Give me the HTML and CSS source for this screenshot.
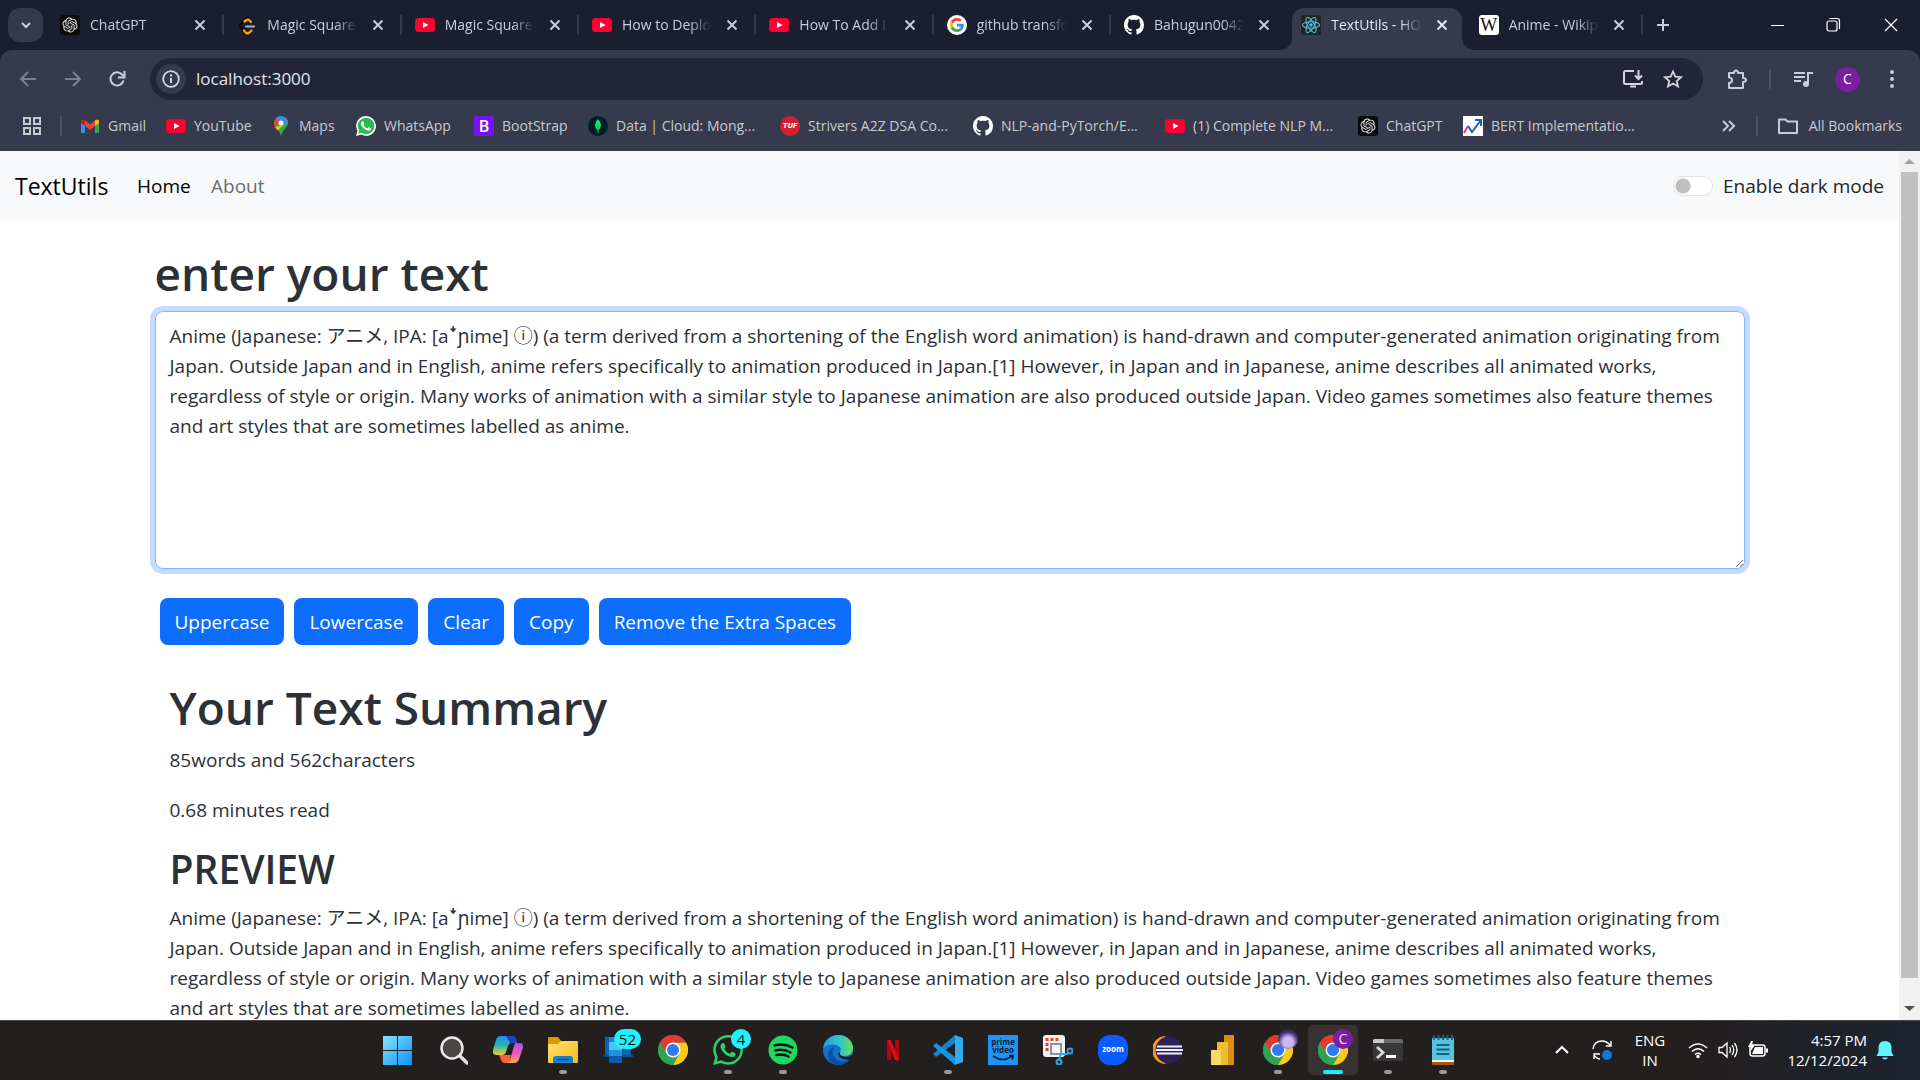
FILE: index.html
```html
<!DOCTYPE html>
<html lang="en">
<head>
<meta charset="utf-8">
<title>TextUtils - Home</title>
<link rel="stylesheet" href="styles.css">
</head>
<body>
<svg class="sprite" aria-hidden="true">
  <symbol id="i-openai" viewBox="0 0 20 20"><rect width="20" height="20" rx="3" fill="#0a0a0a"/><g transform="translate(2.500 2.500) scale(.625)"><path fill="#f0f0f0" d="M22.2819 9.8211a5.9847 5.9847 0 0 0-.5157-4.9108 6.0462 6.0462 0 0 0-6.5098-2.9A6.0651 6.0651 0 0 0 4.9807 4.1818a5.9847 5.9847 0 0 0-3.9977 2.9 6.0462 6.0462 0 0 0 .7427 7.0966 5.98 5.98 0 0 0 .511 4.9107 6.051 6.051 0 0 0 6.5146 2.9001A5.9847 5.9847 0 0 0 13.2599 24a6.0557 6.0557 0 0 0 5.7718-4.2058 5.9894 5.9894 0 0 0 3.9977-2.9001 6.0557 6.0557 0 0 0-.7475-7.0729zm-9.022 12.6081a4.4755 4.4755 0 0 1-2.8764-1.0408l.1419-.0804 4.7783-2.7582a.7948.7948 0 0 0 .3927-.6813v-6.7369l2.02 1.1686a.071.071 0 0 1 .038.052v5.5826a4.504 4.504 0 0 1-4.4945 4.4944zm-9.6607-4.1254a4.4708 4.4708 0 0 1-.5346-3.0137l.142.0852 4.783 2.7582a.7712.7712 0 0 0 .7806 0l5.8428-3.3685v2.3324a.0804.0804 0 0 1-.0332.0615L9.74 19.9502a4.4992 4.4992 0 0 1-6.1408-1.6464zM2.3408 7.8956a4.485 4.485 0 0 1 2.3655-1.9728V11.6a.7664.7664 0 0 0 .3879.6765l5.8144 3.3543-2.0201 1.1685a.0757.0757 0 0 1-.071 0l-4.8303-2.7865A4.504 4.504 0 0 1 2.3408 7.872zm16.5963 3.8558L13.1038 8.364 15.1192 7.2a.0757.0757 0 0 1 .071 0l4.8303 2.7913a4.4944 4.4944 0 0 1-.6765 8.1042v-5.6772a.79.79 0 0 0-.407-.667zm2.0107-3.0231l-.142-.0852-4.7735-2.7818a.7759.7759 0 0 0-.7854 0L9.409 9.2297V6.8974a.0662.0662 0 0 1 .0284-.0615l4.8303-2.7866a4.4992 4.4992 0 0 1 6.6802 4.66zM8.3065 12.863l-2.02-1.1638a.0804.0804 0 0 1-.038-.0567V6.0742a4.4992 4.4992 0 0 1 7.3757-3.4537l-.142.0805L8.704 5.459a.7948.7948 0 0 0-.3927.6813zm1.0976-2.3654l2.602-1.4998 2.6069 1.4998v2.9994l-2.5974 1.4997-2.6067-1.4997Z"/></g></symbol>
  <symbol id="i-leetcode" viewBox="0 0 20 20"><path d="M11 1.500 4 9q-1.500 1.500-.5 3l4.500 5.500" fill="none" stroke="#080808" stroke-width="2.200" stroke-linecap="round"/><path d="m7.500 6.500 2-1.500q1.500-1 3 .5l1.500 1.500M7 15.500l1.500 2q2 1.500 4 0l2-2" fill="none" stroke="#ffa116" stroke-width="2.200" stroke-linecap="round"/><path d="M9 11.500h8" stroke="#b3b3b3" stroke-width="2" stroke-linecap="round"/></symbol>
  <symbol id="i-youtube" viewBox="0 0 20 20"><rect y="3" width="20" height="14" rx="3.500" fill="#ff0033"/><path d="m8 7 5.500 3L8 13z" fill="#fff"/></symbol>
  <symbol id="i-google" viewBox="0 0 20 20"><circle cx="10" cy="10" r="10" fill="#fff"/><g transform="translate(3 3) scale(.2917)"><path fill="#EA4335" d="M24 9.500c3.540 0 6.710 1.220 9.210 3.600l6.850-6.850C35.900 2.380 30.470 0 24 0 14.620 0 6.510 5.380 2.560 13.220l7.980 6.190C12.430 13.720 17.740 9.500 24 9.500z"/><path fill="#4285F4" d="M46.980 24.550c0-1.570-.15-3.090-.38-4.550H24v9.020h12.940c-.58 2.960-2.260 5.480-4.780 7.180l7.730 6c4.510-4.180 7.090-10.360 7.090-17.650z"/><path fill="#FBBC05" d="M10.530 28.590c-.48-1.450-.76-2.990-.76-4.590s.27-3.140.76-4.590l-7.980-6.190C.92 16.460 0 20.120 0 24c0 3.880.92 7.540 2.560 10.780l7.970-6.190z"/><path fill="#34A853" d="M24 48c6.480 0 11.930-2.130 15.890-5.810l-7.730-6c-2.150 1.450-4.920 2.300-8.160 2.300-6.260 0-11.570-4.220-13.470-9.910l-7.980 6.190C6.510 42.620 14.620 48 24 48z"/></g></symbol>
  <symbol id="i-github" viewBox="0 0 16 16"><path fill="#fff" d="M8 0C3.580 0 0 3.580 0 8c0 3.540 2.290 6.530 5.470 7.590.4.070.55-.17.55-.38 0-.19-.01-.82-.01-1.490-2.010.37-2.530-.49-2.690-.94-.09-.23-.48-.94-.82-1.130-.28-.15-.68-.52-.01-.53.63-.01 1.080.58 1.230.82.72 1.210 1.870.87 2.330.66.070-.52.28-.87.51-1.070-1.780-.2-3.640-.89-3.640-3.950 0-.87.31-1.590.82-2.150-.08-.2-.36-1.020.08-2.120 0 0 .67-.21 2.200.82.64-.18 1.320-.27 2-.27.68 0 1.360.09 2 .27 1.530-1.040 2.200-.82 2.200-.82.44 1.100.16 1.920.08 2.120.51.56.82 1.270.82 2.150 0 3.070-1.870 3.750-3.650 3.950.29.25.54.73.54 1.480 0 1.070-.01 1.930-.01 2.200 0 .21.15.46.55.38A8.013 8.013 0 0016 8c0-4.420-3.580-8-8-8z"/></symbol>
  <symbol id="i-react" viewBox="0 0 20 20"><rect width="20" height="20" rx="2" fill="#222426"/><g fill="none" stroke="#53c1de" stroke-width="1.100"><ellipse cx="10" cy="10" rx="8.500" ry="3.300"/><ellipse cx="10" cy="10" rx="8.500" ry="3.300" transform="rotate(60 10 10)"/><ellipse cx="10" cy="10" rx="8.500" ry="3.300" transform="rotate(120 10 10)"/></g><circle cx="10" cy="10" r="1.700" fill="#53c1de"/></symbol>
  <symbol id="i-close" viewBox="0 0 20 20"><path d="m5.500 5.500 9 9m0-9-9 9" fill="none" stroke="currentColor" stroke-width="2"/></symbol>
  <symbol id="i-gmail" viewBox="0 0 20 20"><path d="M1 5v12h4V9z" fill="#4285f4"/><path d="M19 5v12h-4V9z" fill="#34a853"/><path d="M15 4.500V10l4-3V5q-.5-2.500-3-1z" fill="#fbbc04"/><path d="M5 4.500V10L1 7V5q.5-2.500 3-1z" fill="#c5221f"/><path d="m5 4.500 5 4 5-4V10l-5 4-5-4z" fill="#ea4335"/></symbol>
  <symbol id="i-maps" viewBox="0 0 20 20"><path d="M3 7a7 7 0 0 1 14 0c0 4-5 6-7 13C8 13 3 11 3 7z" fill="#34a853"/><path d="M5 2.500A7 7 0 0 1 17 7l-4-.5z" fill="#4285f4"/><path d="m5 2.500 4 2.500-5.500 6Q3 9 3 7 3 4.500 5 2.500z" fill="#ea4335"/><path d="m4 11 8-2-5 5.500Q5 13 4 11z" fill="#fbbc04"/><circle cx="10" cy="7" r="2.500" fill="#fff"/></symbol>
  <symbol id="i-wa-path" viewBox="0 0 24 24"><path fill="currentColor" d="M17.472 14.382c-.297-.149-1.758-.867-2.030-.967-.273-.099-.471-.148-.67.15-.197.297-.767.966-.94 1.164-.173.199-.347.223-.644.075-.297-.15-1.255-.463-2.390-1.475-.883-.788-1.480-1.761-1.653-2.059-.173-.297-.018-.458.13-.606.134-.133.298-.347.446-.52.149-.174.198-.298.298-.497.099-.198.05-.371-.025-.52-.075-.149-.669-1.612-.916-2.207-.242-.579-.487-.5-.669-.51-.173-.008-.371-.01-.57-.01-.198 0-.52.074-.792.372-.272.297-1.040 1.016-1.040 2.479 0 1.462 1.065 2.875 1.213 3.074.149.198 2.096 3.200 5.077 4.487.709.306 1.262.489 1.694.625.712.227 1.360.195 1.871.118.571-.085 1.758-.719 2.006-1.413.248-.694.248-1.289.173-1.413-.074-.124-.272-.198-.57-.347m-5.421 7.403h-.004a9.870 9.870 0 01-5.031-1.378l-.361-.214-3.741.982.998-3.648-.235-.374a9.860 9.860 0 01-1.510-5.260c.001-5.450 4.436-9.884 9.888-9.884 2.640 0 5.122 1.030 6.988 2.898a9.825 9.825 0 012.893 6.994c-.003 5.450-4.437 9.884-9.885 9.884m8.413-18.297A11.815 11.815 0 0012.050 0C5.495 0 .16 5.335.157 11.892c0 2.096.547 4.142 1.588 5.945L.057 24l6.305-1.654a11.882 11.882 0 005.683 1.448h.005c6.554 0 11.890-5.335 11.893-11.893a11.821 11.821 0 00-3.480-8.413Z"/></symbol>
  <symbol id="i-whatsapp" viewBox="0 0 24 24"><path d="M1 23 3 17A11 11 0 1 1 7 21.500z" fill="#2abb4c"/><use href="#i-wa-path" width="24" height="24" color="#fff"/></symbol>
  <symbol id="i-mongo" viewBox="0 0 20 20"><circle cx="10" cy="10" r="10" fill="#001e2b"/><path d="M10 3q6 6.500 0 12-6-5.500 0-12z" fill="#00ed64"/><path d="M10 9v8" stroke="#0aa84a"/></symbol>
  <symbol id="i-chart" viewBox="0 0 20 20"><rect width="20" height="20" fill="#fff"/><path d="m1 17 4-7" stroke="#e3405f" stroke-width="2"/><path d="m5 10 4 6 9-12" fill="none" stroke="#1f5fae" stroke-width="2"/><path d="M12 4h6v6" fill="none" stroke="#1f5fae" stroke-width="2"/></symbol>
  <symbol id="i-chrome" viewBox="0 0 30 30"><circle cx="15" cy="15" r="15" fill="#33a152"/><path d="M28 7.500A15 15 0 0 1 15 30l6.500-11.500L15 7.500z" fill="#fdc91c"/><path d="M2 7.500A15 15 0 0 1 28 7.500H15V15L8.500 18.700z" fill="#e23a30"/><path d="M2 7.500 8.500 18.700 15 22 21.500 18.700 15 30A15 15 0 0 1 2 7.500z" fill="#33a152"/><circle cx="15" cy="15" r="7.500" fill="#fff"/><circle cx="15" cy="15" r="6" fill="#2f7bee"/></symbol>
</svg>

<header class="browser">
  <div class="tabstrip">
    <button class="tab-search" aria-label="Search tabs"><svg class="icon" viewBox="0 0 20 20"><path d="m6 8 4 4 4-4" fill="none" stroke="currentColor" stroke-width="2"/></svg></button>
    <nav class="tabs" aria-label="Tabs">
      <div class="tab"><svg class="icon"><use href="#i-openai"/></svg><button class="tab-title">ChatGPT</button><button class="tab-close" aria-label="Close"><svg class="icon"><use href="#i-close"/></svg></button></div>
      <div class="tab"><svg class="icon"><use href="#i-leetcode"/></svg><button class="tab-title">Magic Square</button><button class="tab-close" aria-label="Close"><svg class="icon"><use href="#i-close"/></svg></button></div>
      <div class="tab"><svg class="icon"><use href="#i-youtube"/></svg><button class="tab-title">Magic Square</button><button class="tab-close" aria-label="Close"><svg class="icon"><use href="#i-close"/></svg></button></div>
      <div class="tab"><svg class="icon"><use href="#i-youtube"/></svg><button class="tab-title">How to Deplo</button><button class="tab-close" aria-label="Close"><svg class="icon"><use href="#i-close"/></svg></button></div>
      <div class="tab"><svg class="icon"><use href="#i-youtube"/></svg><button class="tab-title">How To Add I</button><button class="tab-close" aria-label="Close"><svg class="icon"><use href="#i-close"/></svg></button></div>
      <div class="tab"><svg class="icon"><use href="#i-google"/></svg><button class="tab-title">github transfo</button><button class="tab-close" aria-label="Close"><svg class="icon"><use href="#i-close"/></svg></button></div>
      <div class="tab before-active"><svg class="icon"><use href="#i-github"/></svg><button class="tab-title">Bahugun0042</button><button class="tab-close" aria-label="Close"><svg class="icon"><use href="#i-close"/></svg></button></div>
      <div class="tab active"><svg class="icon"><use href="#i-react"/></svg><button class="tab-title">TextUtils - HO</button><button class="tab-close" aria-label="Close"><svg class="icon"><use href="#i-close"/></svg></button></div>
      <div class="tab"><span class="icon letter-icon wiki">W</span><button class="tab-title">Anime - Wikip</button><button class="tab-close" aria-label="Close"><svg class="icon"><use href="#i-close"/></svg></button></div>
    </nav>
    <button class="new-tab" aria-label="New tab"><svg class="icon" viewBox="0 0 20 20"><path d="M10 4v12M4 10h12" stroke="currentColor" stroke-width="2"/></svg></button>
    <div class="window-buttons">
      <button aria-label="Minimize"><svg class="icon" viewBox="0 0 20 20"><path d="M4 10.500h13" stroke="#fff" stroke-width="1"/></svg></button>
      <button aria-label="Restore"><svg class="icon" viewBox="0 0 20 20"><rect x="3" y="6" width="10" height="10" rx="2" fill="none" stroke="#fff" stroke-width="1.200"/><path d="M5.500 3.500H13q2.500 0 2.500 2.500v8" fill="none" stroke="#fff" stroke-width="1.200"/></svg></button>
      <button aria-label="Close window"><svg class="icon" viewBox="0 0 20 20"><path d="m4 4 12 12m0-12L4 16" stroke="#fff" stroke-width="1.200"/></svg></button>
    </div>
  </div>

  <div class="toolbar">
    <div class="nav-buttons">
      <button class="dim" aria-label="Back"><svg class="icon" viewBox="0 0 20 20"><path d="M18 10H3m7-7-7 7 7 7" fill="none" stroke="currentColor" stroke-width="2"/></svg></button>
      <button class="dim" aria-label="Forward"><svg class="icon" viewBox="0 0 20 20"><path d="M2 10h15m-7-7 7 7-7 7" fill="none" stroke="currentColor" stroke-width="2"/></svg></button>
      <button aria-label="Reload"><svg class="icon" viewBox="0 0 20 20"><path d="M15.500 11.500A6.600 6.600 0 1 1 14 5.500l1.500 1.700" fill="none" stroke="currentColor" stroke-width="2"/><path d="M16.500 2v6.500H10" fill="none" stroke="currentColor" stroke-width="2"/></svg></button>
    </div>
    <div class="omnibox">
      <button class="site-info" aria-label="Site information"><svg class="icon" viewBox="0 0 20 20"><circle cx="10" cy="10" r="7.800" fill="none" stroke="currentColor" stroke-width="1.800"/><path d="M10 9v5M10 5.500v2" stroke="currentColor" stroke-width="2"/></svg></button>
      <input class="url" type="text" value="localhost:3000" aria-label="Address">
      <button aria-label="Install app"><svg class="icon" viewBox="0 0 20 20"><path d="M11 2H2.500Q1 2 1 3.500v10Q1 15 2.500 15h15q1.500 0 1.500-1.500V12M7 17.500h6" fill="none" stroke="currentColor" stroke-width="2"/><path d="M15.500 1v9m-3.500-3.500 3.500 3.500L19 6.500" fill="none" stroke="currentColor" stroke-width="2"/></svg></button>
      <button aria-label="Bookmark this tab"><svg class="icon" viewBox="0 0 20 20"><path d="m10 2.500 2.300 5.200 5.700.5-4.300 3.800 1.300 5.500-5-3-5 3 1.300-5.500L2 8.200l5.700-.5z" fill="none" stroke="currentColor" stroke-width="1.800"/></svg></button>
    </div>
    <div class="toolbar-end">
      <button aria-label="Extensions"><svg class="icon" viewBox="0 0 20 20"><path d="M2 4h5q0-2.500 2-2.500T11 4h5v5q3 0 3 2t-3 2v6H2v-5q3 0 3-2.800T2 8.500z" fill="none" stroke="currentColor" stroke-width="2" stroke-linejoin="round"/></svg></button>
      <span class="divider"></span>
      <button aria-label="Media"><svg class="icon" viewBox="0 0 20 20"><path d="M1 4h11M1 8h11M1 12h7M15 15V4h5" fill="none" stroke="currentColor" stroke-width="2"/><circle cx="13" cy="15" r="3" fill="currentColor"/></svg></button>
      <button class="avatar" aria-label="Profile">C</button>
      <button aria-label="Menu"><svg class="icon" viewBox="0 0 20 20" fill="currentColor"><circle cx="10" cy="3" r="2"/><circle cx="10" cy="10" r="2"/><circle cx="10" cy="17" r="2"/></svg></button>
    </div>
  </div>

  <nav class="bookmarks" aria-label="Bookmarks">
    <button class="apps" aria-label="Apps"><svg class="icon" viewBox="0 0 20 20"><path d="M2 2h6v6H2zM12 2h6v6h-6zM2 12h6v6H2zM12 12h6v6h-6z" fill="none" stroke="currentColor" stroke-width="2"/></svg></button>
    <span class="divider"></span>
    <div class="bookmark-list">
      <a href="#"><svg class="icon"><use href="#i-gmail"/></svg>Gmail</a>
      <a href="#"><svg class="icon"><use href="#i-youtube"/></svg>YouTube</a>
      <a href="#"><svg class="icon"><use href="#i-maps"/></svg>Maps</a>
      <a href="#"><svg class="icon"><use href="#i-whatsapp"/></svg>WhatsApp</a>
      <a href="#"><span class="icon letter-icon bootstrap">B</span>BootStrap</a>
      <a href="#"><svg class="icon"><use href="#i-mongo"/></svg>Data | Cloud: Mong...</a>
      <a href="#"><span class="icon letter-icon tuf">TUF</span>Strivers A2Z DSA Co...</a>
      <a href="#"><svg class="icon"><use href="#i-github"/></svg>NLP-and-PyTorch/E...</a>
      <a href="#"><svg class="icon"><use href="#i-youtube"/></svg>(1) Complete NLP M...</a>
      <a href="#"><svg class="icon"><use href="#i-openai"/></svg>ChatGPT</a>
      <a href="#"><svg class="icon"><use href="#i-chart"/></svg>BERT Implementatio...</a>
    </div>
    <button class="more" aria-label="More bookmarks"><svg class="icon" viewBox="0 0 20 20"><path d="m5 5 5 5-5 5m6-10 5 5-5 5" fill="none" stroke="currentColor" stroke-width="2"/></svg></button>
    <span class="divider"></span>
    <a class="all-bookmarks" href="#"><svg class="icon" viewBox="0 0 20 20"><path d="M1 3.500h6.500l2 2H19V17H1z" fill="none" stroke="currentColor" stroke-width="2" stroke-linejoin="round"/></svg>All Bookmarks</a>
  </nav>
</header>

<div class="viewport">
  <div class="page">
    <nav class="navbar">
      <a class="brand" href="#">TextUtils</a>
      <a class="nav-link current" href="#">Home</a>
      <a class="nav-link" href="#">About</a>
      <div class="switch">
        <input type="checkbox" role="switch" id="dark">
        <label for="dark">Enable dark mode</label>
      </div>
    </nav>
    <main class="container">
      <h1><label for="text">enter your text</label></h1>
      <textarea class="editor" id="text" rows="8" spellcheck="false">Anime (Japanese: アニメ, IPA: [aꜜɲime] ⓘ) (a term derived from a shortening of the English word animation) is hand-drawn and computer-generated animation originating from Japan. Outside Japan and in English, anime refers specifically to animation produced in Japan.[1] However, in Japan and in Japanese, anime describes all animated works, regardless of style or origin. Many works of animation with a similar style to Japanese animation are also produced outside Japan. Video games sometimes also feature themes and art styles that are sometimes labelled as anime.</textarea>
      <div class="actions">
        <button class="btn">Uppercase</button>
        <button class="btn">Lowercase</button>
        <button class="btn">Clear</button>
        <button class="btn">Copy</button>
        <button class="btn">Remove the Extra Spaces</button>
      </div>
      <section class="summary">
        <h1>Your Text Summary</h1>
        <p>85words and 562characters</p>
        <p>0.68 minutes read</p>
        <h2>PREVIEW</h2>
        <p>Anime (Japanese: アニメ, IPA: [aꜜɲime] ⓘ) (a term derived from a shortening of the English word animation) is hand-drawn and computer-generated animation originating from Japan. Outside Japan and in English, anime refers specifically to animation produced in Japan.[1] However, in Japan and in Japanese, anime describes all animated works, regardless of style or origin. Many works of animation with a similar style to Japanese animation are also produced outside Japan. Video games sometimes also feature themes and art styles that are sometimes labelled as anime.</p>
      </section>
    </main>
  </div>
  <div class="scrollbar" aria-hidden="true">
    <svg class="arrow" viewBox="0 0 21 21"><path d="m5 13 5.500-5 5.500 5z" fill="#a3a3a3"/></svg>
    <div class="track"><div class="thumb"></div></div>
    <svg class="arrow" viewBox="0 0 21 21"><path d="m5 7 5.500 5L16 7z" fill="#505050"/></svg>
  </div>
</div>

<footer class="taskbar">
  <div class="apps-row">
    <button class="app" aria-label="Start"><svg viewBox="0 0 30 30"><defs><linearGradient id="win" x1="0" y1="0" x2="1" y2="1"><stop offset="0" stop-color="#8be0ff"/><stop offset="1" stop-color="#0a94f5"/></linearGradient></defs><path d="M0 1h14v14H0zM15 1h14v14H15zM0 16h14v14H0zM15 16h14v14H15z" fill="url(#win)"/></svg></button>
    <button class="app" aria-label="Search"><svg viewBox="0 0 30 30"><path d="m21 20 8 8" stroke="#dcdfe3" stroke-width="3.500" stroke-linecap="round"/><circle cx="14" cy="13" r="10.500" fill="#4a4644" stroke="#e8eaec" stroke-width="2.500"/></svg></button>
    <button class="app" aria-label="Copilot"><svg viewBox="0 0 30 30"><defs><linearGradient id="cp1" x1="0" y1="0" x2="0" y2="1"><stop offset="0" stop-color="#1f8ff5"/><stop offset=".5" stop-color="#2bb6a8"/><stop offset="1" stop-color="#f2d13a"/></linearGradient><linearGradient id="cp2" x1="0" y1="0" x2="0" y2="1"><stop offset="0" stop-color="#a552e8"/><stop offset=".5" stop-color="#e85ab5"/><stop offset="1" stop-color="#ffa35e"/></linearGradient></defs><path d="M8 1h11q3 0 4 3l1 4h-5q-3 0-4 3l-2 6q-1 3-4 3H4q-5 0-4-5L3 5q1-4 5-4z" fill="url(#cp1)"/><path d="M13 1h6q3 0 4 3l1 4h-7z" fill="#1b40c9"/><path d="m6 20 2 5q1 3 4 3h4l2-8z" fill="#f5623a"/><path d="M22 8h4q5 0 4 5l-4 11q-1 4-5 4h-8q3 0 4-3l4-14q.5-3 1-3z" fill="url(#cp2)"/></svg></button>
    <button class="app running" aria-label="File Explorer"><svg viewBox="0 0 30 30"><defs><linearGradient id="fe" x1="0" y1="0" x2="1" y2="1"><stop offset="0" stop-color="#ffe17a"/><stop offset="1" stop-color="#f8b90e"/></linearGradient></defs><path d="M0 3q0-1 1-1h9l3 4v4H0z" fill="#d99a06"/><path d="M0 9h10l3-3h16q1 0 1 1v20q0 1-1 1H1q-1 0-1-1z" fill="url(#fe)"/><path d="M5 28v-4q0-3 3-3h14q3 0 3 3v4z" fill="#1580cc"/><path d="M9 24.500h12" stroke="#0a4f86" stroke-width="1.500"/></svg></button>
    <button class="app" aria-label="Phone Link"><svg viewBox="0 0 30 30"><path d="M2 2h26v18H2z" fill="#0a62b0"/><path d="M0 20h30v2H1z" fill="#12508f"/><path d="M6 2h13v5H6z" fill="#1586d6"/><path d="M6 7h13v8H6z" fill="#49c4f7"/><path d="M6 15h13v6H6z" fill="#1c93e2"/><path d="M6 21h13v7H6z" fill="#0b5cad"/></svg><span class="badge">52</span></button>
    <button class="app" aria-label="Chrome"><svg><use href="#i-chrome"/></svg></button>
    <button class="app running" aria-label="WhatsApp"><svg class="green"><use href="#i-wa-path"/></svg><span class="badge">4</span></button>
    <button class="app running" aria-label="Spotify"><svg viewBox="0 0 30 30"><circle cx="15" cy="15" r="14.500" fill="#1ed760"/><path d="M6.500 10.500q9-2.500 18 2M7.500 15.500q8-2 15 2M8.500 20q7-1.500 12 1.500" fill="none" stroke="#121212" stroke-width="2.500" stroke-linecap="round"/></svg></button>
    <button class="app" aria-label="Edge"><svg viewBox="0 0 30 30"><defs><linearGradient id="ed" x1="0" y1="0" x2="1" y2="0"><stop offset="0" stop-color="#1c9fe8"/><stop offset=".6" stop-color="#35c7c5"/><stop offset="1" stop-color="#6de04f"/></linearGradient></defs><circle cx="15" cy="15" r="15" fill="#1272c9"/><path d="M0 14C1 5 8 0 15 0c9 0 15 6 15 13 0 5-4 8-8 8-5 0-6-2-5-4 2-3 0-6-4-7Q5 8 0 14z" fill="url(#ed)"/><path d="M12 11q-5 7 1 13 6 5 14 0-4 6-12 6-9-1-10-9 0-7 7-10z" fill="#0d4f9e"/><path d="M17 17q-1 4 5 5 4 0 7-2l2 3-4 2q-12 0-12-7z" fill="#241f1f"/></svg></button>
    <button class="app" aria-label="Netflix"><svg viewBox="0 0 30 30"><path d="M9 5h4v20l-4 .5z" fill="#b1060f"/><path d="M17 5h4v20.500l-4-.5z" fill="#b1060f"/><path d="M9 5h4l8 20.500-4-.5z" fill="#e50914"/></svg></button>
    <button class="app running" aria-label="VS Code"><svg viewBox="0 0 30 30"><path d="m22 0 8 3v24l-8 3z" fill="#32aaf0"/><path d="M22 8 3 22l-3-3L22 0z" fill="#1583cc"/><path d="M22 22 3 8l-3 3 22 19z" fill="#1a93de"/></svg></button>
    <button class="app" aria-label="Prime Video"><svg viewBox="0 0 30 30"><rect width="30" height="30" fill="#1f93f7"/><text x="15" y="10" text-anchor="middle" font-family="Open Sans, sans-serif" font-size="8" font-weight="700" fill="#0b2036">prime</text><text x="15" y="18" text-anchor="middle" font-family="Open Sans, sans-serif" font-size="8" font-weight="700" fill="#0b2036">video</text><path d="M5 21q10 7 19 0m-3-.5h4l-.5 4" fill="none" stroke="#0b2036" stroke-width="1.600"/></svg></button>
    <button class="app" aria-label="Snipping Tool"><svg viewBox="0 0 30 30"><rect width="22" height="22" rx="3" fill="#f2f4f6"/><path d="M4 16V4.500h13" fill="none" stroke="#e0481f" stroke-width="3" stroke-dasharray="3 2"/><path d="M8 9h10v10H8z" fill="none" stroke="#8b949c" stroke-width="2"/><path d="m16 25 2-6h7" fill="none" stroke="#2aa7e8" stroke-width="2"/><circle cx="27" cy="16" r="2.500" fill="none" stroke="#2aa7e8" stroke-width="2"/><circle cx="16" cy="27" r="2.500" fill="none" stroke="#2aa7e8" stroke-width="2"/></svg></button>
    <button class="app" aria-label="Zoom"><svg viewBox="0 0 30 30"><rect width="30" height="30" rx="12" fill="#0b5cff"/><text x="15" y="17" text-anchor="middle" font-family="Open Sans, sans-serif" font-size="8" font-weight="700" fill="#fff">zoom</text></svg></button>
    <button class="app" aria-label="Eclipse"><svg viewBox="0 0 30 30"><path d="M13 1A14 14 0 0 0 13 29 19 19 0 0 1 13 1z" fill="#f7941e"/><circle cx="16" cy="15" r="13.500" fill="#2c2255"/><path d="M4 11.500h25M3 15h27M4 18.500h25" stroke="#f1f0f6" stroke-width="2"/></svg></button>
    <button class="app" aria-label="Power BI"><svg viewBox="0 0 30 30"><path d="M16 0h10v30H16z" fill="#d98e12"/><path d="M9 7h11v23H9z" fill="#ecbc31"/><path d="M3 15h10v15H3z" fill="#fad95f"/></svg></button>
    <button class="app running" aria-label="Chrome profile 1"><svg><use href="#i-chrome"/></svg><span class="profile photo"></span></button>
    <button class="app open" aria-label="Chrome profile 2"><svg><use href="#i-chrome"/></svg><span class="profile">C</span></button>
    <button class="app running" aria-label="Terminal"><svg viewBox="0 0 30 30"><rect y="4" width="30" height="22" rx="2" fill="#383838"/><path d="M0 8V6q0-2 2-2h26q2 0 2 2v2z" fill="#6b6b6b"/><path d="M2 4h9v4H0V6q0-2 2-2z" fill="#c9c9c9"/><path d="m4 12 6 5.500L4 23" fill="none" stroke="#d8d8d8" stroke-width="2.800"/><path d="M13 21.500h10" stroke="#fff" stroke-width="3"/></svg></button>
    <button class="app running" aria-label="Notepad"><svg viewBox="0 0 30 30"><path d="M4 26h22v4H4z" fill="#a85412"/><path d="M4 25h22v2H4z" fill="#f3f6f8"/><path d="M4 3h22v22H4z" fill="#57c3de"/><path d="M6 0v5M10.500 0v5M15 0v5M19.500 0v5M24 0v5" stroke="#1d6484" stroke-width="2"/><path d="M8.500 10h13M8.500 14.500h13M8.500 19h13" stroke="#17617f" stroke-width="2"/></svg></button>
  </div>
  <div class="tray">
    <button aria-label="Hidden icons"><svg class="icon" viewBox="0 0 20 20"><path d="m4 13 6-6 6 6" fill="none" stroke="#fff" stroke-width="2"/></svg></button>
    <button class="sync" aria-label="Updates"><svg class="icon" viewBox="0 0 20 20"><path d="M1 9Q2 1 10 1q5 0 9 5m0-5v5h-5M2 15q3 4 6 4M2 19v-5h6" fill="none" stroke="#fff" stroke-width="1.400"/><circle cx="15" cy="15" r="5" fill="#0b7ad9"/></svg></button>
    <button class="lang">ENG<br>IN</button>
    <button class="status" aria-label="Network, volume and battery">
      <svg class="icon" viewBox="0 0 20 20" fill="none" stroke="#fff" stroke-width="1.600"><path d="M1 8q9-8 18 0M4 11.500q6-5.500 12 0M7 14.500q3-2.500 6 0"/><circle cx="10" cy="16.500" r="1" fill="#fff"/></svg>
      <svg class="icon" viewBox="0 0 20 20" fill="none" stroke="#fff" stroke-width="1.300"><path d="M1 7.500h3L9 3v14l-5-4.500H1zM11.500 7q2 3 0 6M14 5q3.500 5 0 10M16.500 3q5 7 0 14"/></svg>
      <svg class="icon" viewBox="0 0 20 20"><rect x="2" y="5" width="15" height="11" rx="2.500" fill="none" stroke="#fff" stroke-width="1.500"/><path d="M7 7h8v7H4zM18 8.500h2v4h-2z" fill="#fff"/><path d="M3 1 0 7h3l-1 5 5-7H4l1-4z" fill="#fff"/></svg>
    </button>
    <button class="clock">4:57 PM<br>12/12/2024</button>
    <button aria-label="Notifications"><svg class="icon" viewBox="0 0 20 20"><path d="M10 1q6.500 0 6.500 7v4l2 4h-17l2-4V8Q3.500 1 10 1zM7 17.500h6q-1 2-3 2t-3-2z" fill="#60f5ff"/></svg></button>
  </div>
</footer>
</body>
</html>
```
FILE: styles.css
```css
* { box-sizing: border-box; }

body {
  margin: 0;
  height: 100vh;
  display: flex;
  flex-direction: column;
  overflow: hidden;
  font-family: "Open Sans", "Noto Sans", "Noto Sans CJK JP", "DejaVu Sans", sans-serif;
  font-size: 19px;
  line-height: 30px;
  color: #212529;
  background: #fff;
}

button {
  padding: 0;
  border: 0;
  background: none;
  color: inherit;
  font: inherit;
}

a { color: inherit; text-decoration: none; }

.sprite { position: absolute; width: 0; height: 0; }
.icon { display: block; width: 20px; height: 20px; flex: none; }
.divider { width: 2px; height: 20px; background: #50556b; border-radius: 1px; flex: none; }

/* Favicons that are made of letters */
.letter-icon { text-align: center; line-height: 20px; }
.wiki { border-radius: 3px; background: #fff; color: #111; font-family: "Liberation Serif", serif; font-size: 18px; }
.bootstrap { border-radius: 2px; background: #7a12f8; color: #fff; font-size: 16px; font-weight: 600; }
.tuf { border-radius: 50%; background: #d41f30; color: #fff; font-family: Roboto, sans-serif; font-size: 8px; font-weight: 900; font-style: italic; }

/* Browser frame */
.browser {
  flex: none;
  background: #1a1e2f;
  color: #c9cce0;
  font-size: 14px;
  line-height: 20px;
}

.tabstrip { display: flex; align-items: center; height: 50px; padding-left: 8px; }

.tab-search {
  display: grid;
  place-items: center;
  width: 35px;
  height: 34px;
  border-radius: 12px;
  background: #353a4d;
  flex: none;
}

.tabs { display: flex; flex: 0 1 1596px; min-width: 0; margin-left: 4px; align-self: stretch; }

.tab {
  position: relative;
  z-index: 0;
  display: flex;
  align-items: center;
  gap: 10px;
  flex: 1 1 0;
  min-width: 0;
  padding: 0 14px 0 13px;
}

.tab::after {
  content: "";
  position: absolute;
  right: 0;
  top: 15px;
  width: 2px;
  height: 20px;
  background: #353a4d;
}

.tab.before-active::after { display: none; }

.tab.active { color: #e8e9f2; }

.tab.active::before {
  content: "";
  position: absolute;
  z-index: -1;
  inset: 8px 4px 0;
  border-radius: 12px 12px 0 0;
  background: #353a4d;
}

.tab.active::after {
  z-index: -1;
  top: auto;
  bottom: 0;
  left: -8px;
  right: -8px;
  width: auto;
  height: 12px;
  background:
    radial-gradient(circle at 0 0, transparent 12px, #353a4d 12px) left / 12px 12px no-repeat,
    radial-gradient(circle at 100% 0, transparent 12px, #353a4d 12px) right / 12px 12px no-repeat;
}

.tab-title {
  flex: 1;
  min-width: 0;
  overflow: hidden;
  white-space: nowrap;
  text-align: left;
  -webkit-mask-image: linear-gradient(90deg, #000 75%, transparent);
  mask-image: linear-gradient(90deg, #000 75%, transparent);
}

.new-tab { margin-left: 10px; }
.window-buttons { display: flex; gap: 37px; margin-left: auto; padding-right: 19px; }

.toolbar {
  display: flex;
  align-items: center;
  height: 58px;
  padding: 0 18px;
  border-radius: 12px 12px 0 0;
  background: #353a4d;
}

.nav-buttons { display: flex; gap: 25px; width: 132px; flex: none; }
.dim { color: #7c8095; }

.omnibox {
  display: flex;
  align-items: center;
  gap: 20px;
  flex: 1;
  min-width: 0;
  height: 42px;
  padding: 0 20px 0 6px;
  border-radius: 21px;
  background: #212537;
  color: #d3d4dc;
}

.site-info {
  display: grid;
  place-items: center;
  width: 30px;
  height: 30px;
  border-radius: 50%;
  background: #353a4d;
  flex: none;
}

.url {
  flex: 1;
  min-width: 0;
  margin-left: -10px;
  padding: 0;
  border: 0;
  outline: 0;
  background: none;
  color: #e3e4ec;
  font: inherit;
  font-size: 17px;
}

.toolbar-end { display: flex; align-items: center; gap: 22px; margin-left: 24px; }

.avatar {
  width: 25px;
  height: 25px;
  border-radius: 50%;
  background: #7b1fa2;
  color: #fff;
}

.bookmarks {
  display: flex;
  align-items: center;
  height: 43px;
  padding: 0 18px 8px 22px;
  background: #353a4d;
  color: #c9cad0;
}

.apps { margin-right: 18px; }
.bookmark-list {
  display: grid;
  grid-template-columns: 86px 105px 85px 118px 114px 192px 193px 192px 193px 105px auto;
  margin-left: 18px;
}
.bookmarks a { display: flex; align-items: center; gap: 8px; white-space: nowrap; }
.more { margin: 0 18px 0 auto; }
.bookmarks .all-bookmarks { margin-left: 20px; gap: 11px; }

/* Web page */
.viewport { display: flex; flex: 1; min-height: 0; }
.page { flex: 1; min-width: 0; overflow: hidden; }

.navbar {
  display: flex;
  align-items: center;
  height: 70px;
  padding: 0 15px;
  background: #f8f9fa;
}

.brand { width: 122px; font-size: 23px; color: #000; }
.nav-link { width: 74px; color: #6b6c6d; }
.nav-link.current { color: #000; }

.switch { display: flex; align-items: center; gap: 10px; margin-left: auto; }

.switch input {
  appearance: none;
  width: 40px;
  height: 20px;
  margin: 0;
  border: 1px solid #dee2e6;
  border-radius: 10px;
  background: radial-gradient(circle at 9px 9px, #bfbfbf 7px, #fff 8px);
}

.container { max-width: 1590px; margin: 20px auto 0; }

h1, h2 { margin: 0 0 8px; font-weight: 600; color: #2b3136; }
h1 { padding-top: 2px; font-size: 46px; line-height: 60px; }
h2 { margin-bottom: 10px; font-size: 39px; line-height: 48px; }

.editor {
  display: block;
  width: 100%;
  padding: 9px 14px 7px;
  border: 1px solid #86b7fe;
  border-radius: 8px;
  box-shadow: 0 0 0 5px #c2dbfe;
  color: #2b3136;
  font: inherit;
  outline: 0;
  overflow: hidden;
}

.actions { display: flex; flex-wrap: wrap; gap: 10px; padding: 29px 5px 30px; }

.btn {
  height: 47px;
  padding: 0 15px;
  border-radius: 8px;
  background: #0d6efd;
  color: #fff;
}

.summary { padding: 0 15px; color: #2b3136; }
.summary p { margin: 0 0 20px; }

.scrollbar { display: flex; flex-direction: column; width: 21px; background: #f1f1f1; flex: none; }
.arrow { display: block; width: 21px; height: 21px; }
.track { flex: 1; padding: 0 2px; }
.thumb { height: 97.5%; background: #c1c1c1; }

/* Taskbar */
.taskbar {
  display: flex;
  align-items: center;
  flex: none;
  height: 60px;
  padding: 0 25px 0 373px;
  box-shadow: inset 0 1px #4a4646;
  background: linear-gradient(90deg, #241f1f 88%, #1b2430);
  color: #fff;
  font-size: 15px;
  line-height: 20px;
}

.apps-row { display: flex; gap: 5px; }

.app {
  position: relative;
  display: grid;
  place-items: center;
  width: 50px;
  height: 50px;
  border-radius: 5px;
}

.app svg { display: block; width: 30px; height: 30px; }
.green { color: #25d366; }

.app.running::after, .app.open::after {
  content: "";
  position: absolute;
  bottom: 1px;
  width: 8px;
  height: 4px;
  border-radius: 2px;
  background: #9b9898;
}

.app.open { background: #383333; }
.app.open::after { width: 20px; background: #22e9fb; }

.badge {
  position: absolute;
  top: 4px;
  right: 2px;
  min-width: 20px;
  padding: 0 5px;
  border-radius: 10px;
  background: #22f0ff;
  color: #111;
}

.profile {
  position: absolute;
  top: 4px;
  right: 5px;
  width: 20px;
  height: 20px;
  border-radius: 50%;
  background: #7b1fa2;
  color: #eadcf2;
  font-size: 14px;
}

.photo { background: radial-gradient(circle at 50% 65%, #c9b6f5 30%, #4a3070 60%, #20122f); }

.tray { display: flex; align-items: center; margin-left: auto; gap: 20px; }
.lang { width: 36px; }
.status { display: flex; gap: 10px; }
.clock { margin-left: -8px; width: 87px; text-align: right; }
.tray button:last-child { margin-left: -12px; }
```
